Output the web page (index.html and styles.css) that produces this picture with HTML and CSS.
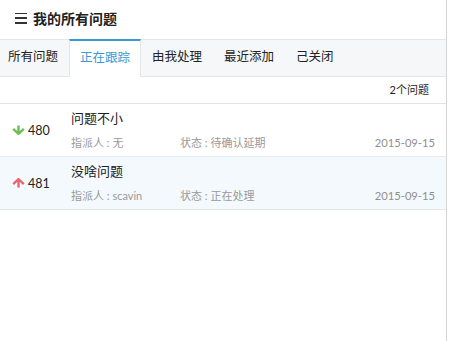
FILE: index.html
```html
<!DOCTYPE html>
<html lang="zh">

<head>
    <meta charset="UTF-8">
    <meta name="viewport" content="width=device-width, initial-scale=1.0">
    <title>我的所有问题</title>
    <link rel="stylesheet" href="styles.css">
</head>

<body>
    <div class="panel">
        <div class="header">
            <span class="menu-icon"><i></i><i></i><i></i></span>
            <span class="title">我的所有问题</span>
        </div>
        <div class="tabs">
            <a class="tab">所有问题</a>
            <a class="tab active">正在跟踪</a>
            <a class="tab">由我处理</a>
            <a class="tab">最近添加</a>
            <a class="tab">己关闭</a>
        </div>
        <div class="count">2个问题</div>
        <ul class="issues">
            <li class="issue">
                <div class="issue-id">
                    <svg class="arrow" width="13" height="10" viewBox="0 0 13 10">
                        <path d="M6.5 0.5v8M1.2 3.8L6.5 8.8l5.3-5" fill="none" stroke="#6cc04f" stroke-width="2.4"/>
                    </svg>
                    <span>480</span>
                </div>
                <div class="issue-body">
                    <div class="issue-title">问题不小</div>
                    <div class="issue-meta">
                        <span class="assignee">指派人 : 无</span>
                        <span class="state">状态 : 待确认延期</span>
                        <span class="date">2015-09-15</span>
                    </div>
                </div>
            </li>
            <li class="issue highlight">
                <div class="issue-id">
                    <svg class="arrow" width="13" height="10" viewBox="0 0 13 10">
                        <path d="M6.5 9.5v-8M1.2 6.2L6.5 1.2l5.3 5" fill="none" stroke="#ea6570" stroke-width="2.4"/>
                    </svg>
                    <span>481</span>
                </div>
                <div class="issue-body">
                    <div class="issue-title">没啥问题</div>
                    <div class="issue-meta">
                        <span class="assignee">指派人 : scavin</span>
                        <span class="state">状态 : 正在处理</span>
                        <span class="date">2015-09-15</span>
                    </div>
                </div>
            </li>
        </ul>
    </div>
</body>
</html>
```

FILE: styles.css
```css
body {
    margin: 0;
    padding: 0;
    background: #fff;
    font-family: 'Lato', 'Noto Sans CJK SC', sans-serif;
    color: #222;
}

.panel {
    width: 447px;
    height: 341px;
    border-right: 1px solid #d4d4d4;
    box-sizing: border-box;
}

.header {
    height: 39px;
    display: flex;
    align-items: center;
    padding-left: 15px;
    padding-bottom: 3px;
    box-sizing: border-box;
}

.menu-icon {
    display: flex;
    flex-direction: column;
    justify-content: space-between;
    width: 12px;
    height: 11px;
    margin-right: 6px;
}

.menu-icon i {
    display: block;
    height: 1.6px;
    background: #333;
}

.title {
    font-size: 14px;
    font-weight: bold;
    color: #222;
}

.tabs {
    display: flex;
    height: 36px;
    background: #f6f7f8;
    border-top: 1px solid #e6e6e6;
    border-bottom: 1px solid #e6e6e6;
}

.tab {
    font-size: 12.5px;
    line-height: 33px;
    padding: 0 11px;
    color: #222;
    cursor: pointer;
}

.tab:first-child {
    padding-left: 8px;
}

.tab.active {
    background: #fff;
    color: #3a98d4;
    border-top: 2px solid #3a98d4;
    border-left: 1px solid #e6e6e6;
    border-right: 1px solid #e6e6e6;
    margin: -1px 0 -1px;
    line-height: 34px;
    height: 36px;
    padding: 0 10px;
}

.count {
    height: 26px;
    line-height: 26px;
    text-align: right;
    font-size: 11px;
    padding-right: 17px;
    border-bottom: 1px solid #e3e3e3;
}

.issues {
    list-style: none;
    margin: 0;
    padding: 0;
}

.issue {
    display: flex;
    height: 52px;
    border-bottom: 1px solid #ececec;
}

.issue.highlight {
    background: #f3f9fd;
    border-bottom-color: #e6e6e6;
}

.issue-id {
    width: 71px;
    display: flex;
    align-items: center;
    padding-left: 12px;
    box-sizing: border-box;
    font-size: 12.5px;
    color: #222;
}

.arrow {
    margin-right: 3px;
}

.issue-body {
    flex: 1;
    padding-top: 4px;
}

.issue-title {
    font-size: 13px;
    line-height: 20px;
    color: #222;
}

.issue-meta {
    display: flex;
    font-size: 11px;
    line-height: 18px;
    color: #999;
    margin-top: 6px;
}

.assignee {
    width: 109px;
}

.state {
    flex: 1;
}

.date {
    padding-right: 11px;
    font-size: 11.2px;
    color: #8f8f8f;
}
```
